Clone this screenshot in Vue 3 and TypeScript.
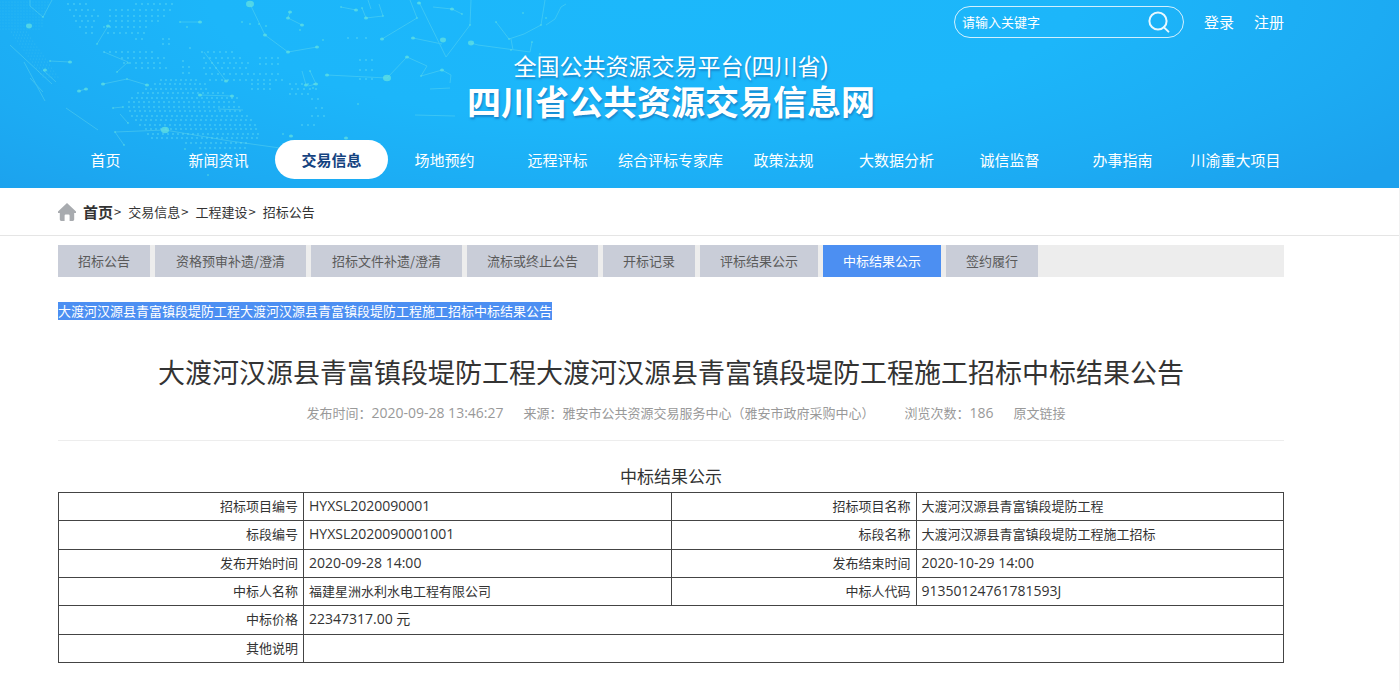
<script setup lang="ts">
interface Field {
  label: string
  value: string
}

interface DotRow {
  y: number
  from: number
  to: number
  step: number
}

const navItems: string[] = [
  '首页', '新闻资讯', '交易信息', '场地预约', '远程评标', '综合评标专家库',
  '政策法规', '大数据分析', '诚信监督', '办事指南', '川渝重大项目',
]
const activeNav = '交易信息'

const crumbs: string[] = ['交易信息', '工程建设', '招标公告']

const tabs: string[] = [
  '招标公告', '资格预审补遗/澄清', '招标文件补遗/澄清', '流标或终止公告',
  '开标记录', '评标结果公示', '中标结果公示', '签约履行',
]
const activeTab = '中标结果公示'

const title = '大渡河汉源县青富镇段堤防工程大渡河汉源县青富镇段堤防工程施工招标中标结果公告'

const rows: Field[][] = [
  [{ label: '招标项目编号', value: 'HYXSL2020090001' }, { label: '招标项目名称', value: '大渡河汉源县青富镇段堤防工程' }],
  [{ label: '标段编号', value: 'HYXSL2020090001001' }, { label: '标段名称', value: '大渡河汉源县青富镇段堤防工程施工招标' }],
  [{ label: '发布开始时间', value: '2020-09-28 14:00' }, { label: '发布结束时间', value: '2020-10-29 14:00' }],
  [{ label: '中标人名称', value: '福建星洲水利水电工程有限公司' }, { label: '中标人代码', value: '91350124761781593J' }],
  [{ label: '中标价格', value: '22347317.00 元' }],
  [{ label: '其他说明', value: '' }],
]

const isLatin = (text: string): boolean => /^[\x20-\x7e]*元?$/.test(text)

// World-map dots behind the banner, row by row
const dotRows: DotRow[] = [
  { y: 4, from: 68, to: 90, step: 6 }, { y: 4, from: 136, to: 172, step: 6 },
  { y: 10, from: 70, to: 94, step: 6 }, { y: 10, from: 110, to: 172, step: 6 },
  { y: 16, from: 74, to: 98, step: 6 }, { y: 16, from: 110, to: 166, step: 6 },
  { y: 21, from: 76, to: 98, step: 6 }, { y: 21, from: 110, to: 158, step: 6 },
  { y: 27, from: 80, to: 94, step: 6 }, { y: 27, from: 104, to: 150, step: 6 },
  { y: 33, from: 86, to: 96, step: 6 }, { y: 33, from: 108, to: 144, step: 6 },
  { y: 39, from: 136, to: 142, step: 6 }, { y: 39, from: 163, to: 174, step: 6 },
  { y: 44, from: 163, to: 174, step: 6 }, { y: 48, from: 190, to: 192, step: 6 },
  { y: 52, from: 104, to: 156, step: 6 }, { y: 52, from: 202, to: 232, step: 6 },
  { y: 58, from: 122, to: 164, step: 6 }, { y: 58, from: 204, to: 244, step: 6 },
  { y: 63, from: 124, to: 164, step: 6 }, { y: 63, from: 206, to: 250, step: 6 },
  { y: 68, from: 136, to: 170, step: 6 }, { y: 68, from: 204, to: 248, step: 6 },
  { y: 58, from: 260, to: 278, step: 6 }, { y: 64, from: 260, to: 280, step: 6 },
  { y: 74, from: 206, to: 278, step: 6 }, { y: 80, from: 210, to: 286, step: 6 },
  { y: 84, from: 252, to: 270, step: 6 }, { y: 89, from: 252, to: 274, step: 6 },
  { y: 84, from: 290, to: 314, step: 6 }, { y: 89, from: 292, to: 316, step: 6 },
  { y: 94, from: 290, to: 310, step: 6 }, { y: 99, from: 312, to: 322, step: 6 },
  { y: 108, from: 316, to: 326, step: 6 }, { y: 116, from: 312, to: 324, step: 6 },
  { y: 125, from: 302, to: 318, step: 6 },
  { y: 38, from: 348, to: 370, step: 9 }, { y: 60, from: 360, to: 376, step: 6 },
  { y: 70, from: 360, to: 372, step: 6 }, { y: 79, from: 360, to: 372, step: 6 },
  { y: 61, from: 183, to: 184, step: 6 }, { y: 67, from: 183, to: 192, step: 6 },
  { y: 73, from: 183, to: 192, step: 6 },
  { y: 80, from: 161, to: 198, step: 5 }, { y: 84, from: 155, to: 206, step: 5 },
  { y: 89, from: 146, to: 210, step: 5 }, { y: 93, from: 138, to: 226, step: 5 },
  { y: 98, from: 132, to: 238, step: 5 }, { y: 102, from: 129, to: 238, step: 5 },
  { y: 107, from: 129, to: 242, step: 5 }, { y: 111, from: 130, to: 242, step: 5 },
  { y: 116, from: 132, to: 248, step: 5 }, { y: 120, from: 136, to: 252, step: 5 },
  { y: 125, from: 140, to: 256, step: 5 }, { y: 129, from: 146, to: 258, step: 5 },
  { y: 134, from: 148, to: 260, step: 5 }, { y: 138, from: 152, to: 258, step: 5 },
  { y: 143, from: 186, to: 250, step: 5 }, { y: 148, from: 200, to: 246, step: 5 },
]

const dots = dotRows.flatMap(({ y, from, to, step }) => {
  const points: { x: number; y: number }[] = []
  for (let x = from; x <= to; x += step) points.push({ x, y })
  return points
})

// Fine mesh in the banner's left corner
const mesh: { x: number; y: number }[] = []
for (let y = 2; y < 80; y += 3) {
  const from = y < 30 ? 0 : (y - 30) * 0.7 + 10
  const to = y < 30 ? 50 - y * 0.3 : from + 18
  for (let x = from; x < to; x += 3) mesh.push({ x, y })
}

const links: string[] = [
  '30,0 30,6 43,17 52,0', '108,26 97,44', '180,22 200,22', '50,61 70,62', '128,62 117,72',
  '104,52 128,62', '103,84 127,79 147,85', '79,91 86,89', '204,52 226,81', '200,95 232,96',
  '250,4 265,35 288,52 317,47', '290,12 288,18 302,25', '327,75 387,78 407,57 427,66 421,76 442,70',
  '341,7 356,10', '362,8 366,18 383,16 379,4', '368,0 371,9', '410,0 417,18 382,39',
  '419,2 446,57 470,25 471,0', '413,38 442,44', '430,89 450,88', '433,7 452,9 462,14',
  '471,43 478,45 530,52 532,42', '442,70 451,75 450,83', '302,71 306,85', '310,71 316,84 308,86',
  '113,108 123,107', '120,114 128,123', '115,132 165,130', '115,132 124,145', '66,108 98,130',
  '218,109 243,110', '496,22 509,39 524,34 541,25', '513,50 511,39', '541,25 545,0',
  '546,25 555,19 561,7 566,4', '415,115 455,116', '10,45 52,84', '24,62 45,101', '43,70 56,82',
  '30,78 43,92', '165,130 230,141 280,148',
]

const nodes: { x: number; y: number; r: number }[] = [
  { x: 250, y: 4, r: 4 }, { x: 265, y: 35, r: 2 }, { x: 288, y: 52, r: 2 }, { x: 317, y: 47, r: 2 },
  { x: 387, y: 78, r: 4 }, { x: 443, y: 40, r: 3 }, { x: 471, y: 43, r: 3 }, { x: 419, y: 3, r: 2 },
  { x: 165, y: 130, r: 4 }, { x: 29, y: 26, r: 3 }, { x: 108, y: 26, r: 2 }, { x: 97, y: 44, r: 1 },
  { x: 43, y: 17, r: 1 }, { x: 200, y: 22, r: 2 }, { x: 180, y: 22, r: 1 }, { x: 187, y: 27, r: 1 },
  { x: 288, y: 18, r: 2 }, { x: 290, y: 12, r: 2 }, { x: 302, y: 25, r: 2 }, { x: 300, y: 30, r: 1 },
  { x: 50, y: 61, r: 1 }, { x: 70, y: 62, r: 2 }, { x: 45, y: 70, r: 2 }, { x: 103, y: 84, r: 2 },
  { x: 147, y: 85, r: 2 }, { x: 127, y: 79, r: 1 }, { x: 79, y: 91, r: 2 }, { x: 86, y: 89, r: 2 },
  { x: 117, y: 72, r: 1 }, { x: 128, y: 63, r: 1 }, { x: 226, y: 81, r: 2 }, { x: 200, y: 95, r: 2 },
  { x: 232, y: 96, r: 2 }, { x: 327, y: 75, r: 2 }, { x: 407, y: 57, r: 2 }, { x: 356, y: 10, r: 2 },
  { x: 341, y: 7, r: 1 }, { x: 366, y: 18, r: 2 }, { x: 383, y: 16, r: 1 }, { x: 362, y: 8, r: 1 },
  { x: 382, y: 39, r: 2 }, { x: 417, y: 18, r: 1 }, { x: 413, y: 38, r: 2 }, { x: 442, y: 70, r: 2 },
  { x: 421, y: 76, r: 1 }, { x: 452, y: 9, r: 2 }, { x: 462, y: 14, r: 1 }, { x: 470, y: 25, r: 1 },
  { x: 306, y: 85, r: 2 }, { x: 316, y: 84, r: 2 }, { x: 310, y: 71, r: 1 }, { x: 313, y: 88, r: 1 },
  { x: 113, y: 108, r: 1 }, { x: 123, y: 107, r: 1 }, { x: 128, y: 123, r: 1 }, { x: 115, y: 132, r: 1 },
  { x: 523, y: 13, r: 1 }, { x: 509, y: 39, r: 1 }, { x: 511, y: 50, r: 1 }, { x: 496, y: 22, r: 1 },
  { x: 541, y: 25, r: 1 }, { x: 546, y: 18, r: 1 }, { x: 532, y: 42, r: 1 }, { x: 540, y: 54, r: 1 },
  { x: 283, y: 134, r: 1 }, { x: 291, y: 136, r: 2 }, { x: 346, y: 138, r: 2 }, { x: 358, y: 104, r: 1 },
  { x: 242, y: 22, r: 1 }, { x: 250, y: 24, r: 1 }, { x: 259, y: 24, r: 1 }, { x: 266, y: 26, r: 1 },
  { x: 323, y: 40, r: 1 }, { x: 185, y: 149, r: 1 }, { x: 208, y: 175, r: 1 }, { x: 124, y: 145, r: 1 },
]
</script>

<template>
  <div class="page">
    <header class="banner">
      <svg class="sky" viewBox="0 0 600 187" width="600" height="187" aria-hidden="true">
        <g class="mesh">
          <circle v-for="(d, i) in mesh" :key="i" :cx="d.x" :cy="d.y" r="0.6" />
        </g>
        <g class="dots">
          <circle v-for="(d, i) in dots" :key="i" :cx="d.x" :cy="d.y" r="0.9" />
        </g>
        <g class="links">
          <polyline v-for="(p, i) in links" :key="i" :points="p" />
        </g>
        <g class="nodes">
          <ellipse v-for="(n, i) in nodes" :key="i" :cx="n.x" :cy="n.y" :rx="n.r" :ry="n.r * 0.8" />
        </g>
      </svg>

      <div class="topbar">
        <form class="search" role="search" @submit.prevent>
          <input type="text" aria-label="请输入关键字" placeholder="请输入关键字" />
          <button type="submit" aria-label="搜索">
            <svg viewBox="0 0 22 22" width="22" height="22" aria-hidden="true">
              <circle cx="10" cy="10" r="8.6" />
              <path d="M16 16.4 L20.4 20.6" />
            </svg>
          </button>
        </form>
        <a href="#">登录</a>
        <a href="#">注册</a>
      </div>

      <p class="platform">全国公共资源交易平台(四川省)</p>
      <p class="site">四川省公共资源交易信息网</p>

      <nav class="nav">
        <a v-for="item in navItems" :key="item" href="#" :class="{ active: item === activeNav }">{{ item }}</a>
      </nav>
    </header>

    <div class="crumbs">
      <svg viewBox="0 0 18 18" width="18" height="18" aria-hidden="true">
        <path d="M9 0 L18 8.4 V10 H16.2 V16.6 Q16.2 18 14.8 18 H11.6 V12.6 Q11.6 11.6 10.6 11.6 H7.6 Q6.6 11.6 6.6 12.6 V18 H3.2 Q1.8 18 1.8 16.6 V10 H0 V8.4 Z" />
      </svg>
      <a class="home" href="#">首页</a>
      <template v-for="c in crumbs" :key="c">
        <span class="sep">&gt;</span><a href="#">{{ c }}</a>
      </template>
    </div>

    <main class="content">
      <div class="tabs">
        <button
          v-for="t in tabs"
          :key="t"
          type="button"
          :class="{ active: t === activeTab, wide: t.length > 8 }"
        >{{ t }}</button>
      </div>

      <p class="selected"><a href="#">{{ title }}</a></p>

      <h1>{{ title }}</h1>
      <div class="meta">
        <span>发布时间：<span class="latin">2020-09-28 13:46:27</span></span>
        <span>来源：雅安市公共资源交易服务中心（雅安市政府采购中心）</span>
        <span class="views">浏览次数：<span class="latin">186</span></span>
        <a href="#">原文链接</a>
      </div>

      <table>
        <caption>中标结果公示</caption>
        <colgroup>
          <col class="label-col" /><col class="value-col" /><col class="label-col" /><col class="value-col" />
        </colgroup>
        <tbody>
          <tr v-for="(row, i) in rows" :key="i">
            <template v-for="f in row" :key="f.label">
              <th scope="row">{{ f.label }}</th>
              <td :colspan="row.length === 1 ? 3 : 1" :class="{ latin: isLatin(f.value) }">{{ f.value }}</td>
            </template>
          </tr>
        </tbody>
      </table>
    </main>
  </div>
</template>

<style>
body {
  background: #fff;
}
</style>

<style scoped>
.page {
  --left: 58px;
  --right: 116px;
  font-family: "Noto Sans CJK SC", sans-serif;
  font-size: 13px;
  line-height: 20px;
  color: #333;
  min-height: 100vh;
  box-sizing: border-box;
  border-right: 1px solid #f1f1f1;
}

a {
  color: inherit;
  text-decoration: none;
}

p,
h1 {
  margin: 0;
}

.banner {
  position: relative;
  overflow: hidden;
  background: radial-gradient(ellipse 62% 130% at 46% 0, #1cb8fb 0%, #1cb6fa 50%, #1cabf3 85%, #1ca1ed 110%);
  color: #fff;
  padding-bottom: 9px;
}

.sky {
  position: absolute;
  left: 0;
  top: 0;
}

.mesh {
  fill: #7fe6ee;
  opacity: 0.22;
}

.dots {
  fill: #6fe3f2;
  opacity: 0.5;
}

.links {
  fill: none;
  stroke: #7fe8ea;
  stroke-width: 1;
  opacity: 0.32;
}

.nodes {
  fill: #66e4e0;
  opacity: 0.7;
}

.topbar {
  position: relative;
  display: flex;
  justify-content: flex-end;
  align-items: center;
  gap: 20px;
  padding: 6px calc(var(--right) - 1px) 0 var(--left);
  font-size: 15px;
}

.search {
  display: flex;
  align-items: center;
  box-sizing: border-box;
  width: 230px;
  height: 32px;
  border: 1px solid rgba(255, 255, 255, 0.8);
  border-radius: 16px;
  padding: 0 13px 0 7px;
}

.search input {
  flex: 1;
  min-width: 0;
  padding: 0;
  border: 0;
  outline: 0;
  background: none;
  color: #fff;
  font: inherit;
  font-size: 13px;
}

.search input::placeholder {
  color: #fff;
  opacity: 1;
}

.search button {
  display: flex;
  padding: 0;
  border: 0;
  background: none;
  cursor: pointer;
}

.search svg {
  fill: none;
  stroke: #e8f8ff;
  stroke-width: 2;
  stroke-linecap: round;
}

.platform,
.site {
  position: relative;
  text-align: center;
  padding: 0 calc(var(--right) - 1px) 0 var(--left);
  text-shadow: 1px 2px 2px rgba(20, 90, 160, 0.5);
}

.platform {
  margin-top: 16px;
  font-family: Roboto, "Noto Sans CJK SC", sans-serif;
  font-size: 23px;
  line-height: 28px;
}

.site {
  font-family: Roboto, "Noto Sans CJK SC", sans-serif;
  font-size: 34px;
  font-weight: 700;
  line-height: 42px;
}

.nav {
  position: relative;
  display: grid;
  grid-template-columns: repeat(11, 1fr);
  margin-top: 16px;
  padding: 0 107px 0 49px;
  font-size: 15px;
  line-height: 39px;
  text-align: center;
  white-space: nowrap;
}

.nav .active {
  background: #fff;
  border-radius: 20px;
  color: #14427f;
  font-weight: 700;
}

.crumbs {
  display: flex;
  align-items: center;
  height: 47px;
  padding: 0 var(--right) 0 var(--left);
  border-bottom: 1px solid #e5e5e5;
}

.crumbs svg {
  fill: #a8abaf;
}

.crumbs .home {
  margin-left: 7px;
  font-size: 15px;
  font-weight: 700;
}

.crumbs .sep {
  margin: 0 7px 0 1px;
}

.content {
  padding: 9px calc(var(--right) - 1px) 28px var(--left);
}

.tabs {
  display: flex;
  gap: 5px;
  background: #ededed;
}

.tabs button {
  height: 32px;
  padding: 0 20px;
  border: 0;
  background: #c9cdd8;
  color: #5a5a5a;
  font: inherit;
  white-space: nowrap;
  cursor: pointer;
}

.tabs .wide {
  min-width: 151px;
}

.tabs .active {
  background: #4c8ff2;
  color: #fff;
}

.selected {
  margin-top: 24px;
}

.selected a {
  display: inline-block;
  background: #4c8ff2;
  color: #fff;
  line-height: 18px;
}

h1 {
  margin-top: 31px;
  font-size: 27px;
  font-weight: 400;
  line-height: 40px;
  text-align: center;
}

.meta {
  display: flex;
  justify-content: center;
  gap: 20px;
  padding: 11px 0 17px 30px;
  border-bottom: 1px solid #ededed;
  color: #999;
}

.meta .views {
  margin-left: 10px;
}

.latin {
  font-family: "Open Sans", "Noto Sans CJK SC", sans-serif;
  font-size: 14px;
}

table {
  width: 100%;
  height: 171px;
  margin-top: 21px;
  border-collapse: collapse;
  table-layout: fixed;
}

caption {
  padding-bottom: 2px;
  font-size: 17px;
  line-height: 28px;
}

.label-col {
  width: 20%;
}

.value-col {
  width: 30%;
}

th,
td {
  padding: 3px 5px 4px;
  border: 1px solid #444;
  font-weight: 400;
  text-align: left;
}

th {
  text-align: right;
}
</style>
